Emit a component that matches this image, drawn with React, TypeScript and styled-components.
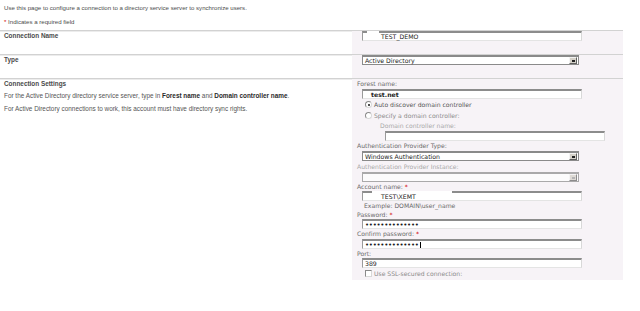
import styled, { createGlobalStyle } from 'styled-components';

const GlobalStyle = createGlobalStyle`
  html, body {
    margin: 0;
    padding: 0;
    background: #ffffff;
  }
  body {
    font-family: "Liberation Sans", Arial, sans-serif;
  }
`;

const Page = styled.div`
  width: 623px;
  display: flex;
  flex-direction: column;
`;

const Intro = styled.div`
  padding: 3px 0 0 4px;
  height: 30px;
  box-sizing: border-box;
  display: flex;
  flex-direction: column;
  gap: 4px;
  font-size: 6.1px;
  line-height: 10px;
  color: #4c4c4c;
`;

const Star = styled.span`
  color: #d00000;
`;

const Section = styled.div<{ $height: number }>`
  display: grid;
  grid-template-columns: 352px 1fr;
  height: ${p => p.$height}px;
  box-sizing: border-box;
  border-top: 1px solid #d2d2d2;
  box-shadow: inset 0 1px 0 #ececec;
`;

const Left = styled.div`
  padding: 1px 0 0 4px;
  display: flex;
  flex-direction: column;
  gap: 3px;
`;

const Heading = styled.div`
  font-weight: bold;
  font-size: 6.4px;
  line-height: 8px;
  color: #4a4a4a;
`;

const Desc = styled.div`
  font-size: 6.4px;
  line-height: 10px;
  color: #555555;

  b {
    color: #2a2a2a;
  }
`;

const Right = styled.div`
  background: #f7f3f7;
  padding: 0 0 0 5px;
  display: flex;
  flex-direction: column;
  font-family: "DejaVu Sans", Verdana, sans-serif;
`;

const Label = styled.div<{ $disabled?: boolean; $indent?: number; $h?: number }>`
  font-size: 6.1px;
  line-height: ${p => p.$h ?? 10}px;
  height: ${p => p.$h ?? 10}px;
  padding-left: ${p => p.$indent ?? 0}px;
  color: ${p => (p.$disabled ? '#a8a8a8' : '#6a6a6a')};
  white-space: nowrap;
`;

const Field = styled.div<{ $indent?: number; $width?: number }>`
  position: relative;
  margin-left: ${p => p.$indent ?? 5}px;
  width: ${p => p.$width ?? 220}px;
  height: 10px;
  box-sizing: border-box;
  background: #ffffff;
  border-top: 2px solid #8c8c8c;
  border-left: 1px solid #9a9a9a;
  border-right: 1px solid #d8d8d8;
  border-bottom: 1px solid #e4e4e4;
  font-size: 6.2px;
  line-height: 7px;
  padding-left: 2px;
  color: #1a1a1a;
  white-space: nowrap;
`;

const Mask = styled.span<{ $left: number; $width: number; $top?: number; $height?: number }>`
  position: absolute;
  left: ${p => p.$left}px;
  top: ${p => p.$top ?? -2}px;
  width: ${p => p.$width}px;
  height: ${p => p.$height ?? 3}px;
  background: #ffffff;
`;

const Dots = styled.span`
  font-size: 7px;
  letter-spacing: -0.3px;
  line-height: 7px;
`;

const Caret = styled.span`
  display: inline-block;
  width: 1px;
  height: 6px;
  background: #000;
  vertical-align: middle;
  margin-left: 1px;
`;

const Select = styled.div<{ $disabled?: boolean }>`
  margin-left: 5px;
  width: 217px;
  height: 10px;
  box-sizing: border-box;
  background: #ffffff;
  border: 1px solid #8a8a8a;
  border-top-width: 2px;
  display: flex;
  align-items: center;
  justify-content: space-between;
  font-size: 6.2px;
  color: #1a1a1a;
  padding-left: 2px;
  opacity: ${p => (p.$disabled ? 0.7 : 1)};
`;

const DropButton = styled.span<{ $disabled?: boolean }>`
  width: 8px;
  height: 7px;
  box-sizing: border-box;
  background: #d4d0c8;
  border-top: 1px solid #f4f4f4;
  border-left: 1px solid #f4f4f4;
  border-right: 1px solid #606060;
  border-bottom: 1px solid #606060;
  display: flex;
  align-items: center;
  justify-content: center;
  margin-right: 1px;

  &::after {
    content: '';
    width: 3px;
    height: 2px;
    background: ${p => (p.$disabled ? '#9a9a9a' : '#222')};
  }
`;

const OptionRow = styled.div<{ $disabled?: boolean }>`
  display: flex;
  align-items: center;
  gap: 2px;
  height: 11px;
  padding-left: 8px;
  font-size: 6.1px;
  color: ${p => (p.$disabled ? '#8a8a8a' : '#555555')};
  white-space: nowrap;
`;

const Radio = styled.span<{ $checked?: boolean }>`
  width: 5px;
  height: 5px;
  border-radius: 50%;
  background: #ffffff;
  border: 1px solid #8a8a8a;
  border-right-color: #d8d8d8;
  border-bottom-color: #d8d8d8;
  display: flex;
  align-items: center;
  justify-content: center;

  &::after {
    content: '';
    width: 2px;
    height: 2px;
    border-radius: 50%;
    background: ${p => (p.$checked ? '#111' : 'transparent')};
  }
`;

const Check = styled.span`
  width: 5px;
  height: 5px;
  background: #ffffff;
  border: 1px solid #8a8a8a;
  border-right-color: #d8d8d8;
  border-bottom-color: #d8d8d8;
`;

const Req = () => <Star> *</Star>;

export default function App() {
  return (
    <Page>
      <GlobalStyle />
      <Intro>
        <div>Use this page to configure a connection to a directory service server to synchronize users.</div>
        <div><Star>*</Star> Indicates a required field</div>
      </Intro>

      <Section $height={24}>
        <Left>
          <Heading>Connection Name</Heading>
        </Left>
        <Right>
          <Field>
            <Mask $left={4} $width={12} $height={9} />
            <span style={{ paddingLeft: 16 }}>TEST_DEMO</span>
          </Field>
        </Right>
      </Section>

      <Section $height={24}>
        <Left>
          <Heading>Type</Heading>
        </Left>
        <Right>
          <Select>
            Active Directory
            <DropButton />
          </Select>
        </Right>
      </Section>

      <Section $height={202}>
        <Left>
          <Heading>Connection Settings</Heading>
          <Desc>For the Active Directory directory service server, type in <b>Forest name</b> and <b>Domain controller name</b>.</Desc>
          <Desc>For Active Directory connections to work, this account must have directory sync rights.</Desc>
        </Left>
        <Right>
          <Label>Forest name:</Label>
          <Field>
            <b style={{ paddingLeft: 6 }}>test.net</b>
          </Field>
          <OptionRow>
            <Radio $checked />
            Auto discover domain controller
          </OptionRow>
          <OptionRow $disabled>
            <Radio />
            Specify a domain controller:
          </OptionRow>
          <Label $disabled $indent={23}>Domain controller name:</Label>
          <Field $indent={28} $width={220} />
          <Label>Authentication Provider Type:</Label>
          <Select>
            Windows Authentication
            <DropButton />
          </Select>
          <Label $disabled $h={11}>Authentication Provider Instance:</Label>
          <Select $disabled>
            <span />
            <DropButton $disabled />
          </Select>
          <Label $h={9}>Account name:<Req /></Label>
          <Field>
            <Mask $left={9} $width={80} />
            <span style={{ paddingLeft: 16 }}>TEST\XEMT</span>
          </Field>
          <Label $indent={7} $h={9}>Example: DOMAIN\user_name</Label>
          <Label $h={9}>Password:<Req /></Label>
          <Field>
            <Dots>••••••••••••••</Dots>
          </Field>
          <Label>Confirm password:<Req /></Label>
          <Field>
            <Dots>••••••••••••••</Dots>
            <Caret />
          </Field>
          <Label $h={9}>Port:</Label>
          <Field>389</Field>
          <OptionRow $disabled>
            <Check />
            Use SSL-secured connection:
          </OptionRow>
        </Right>
      </Section>
    </Page>
  );
}
